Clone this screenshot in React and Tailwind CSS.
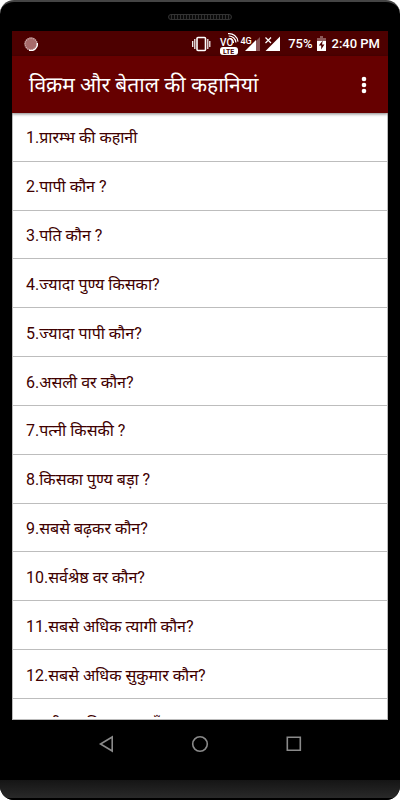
import React from "react";

const stories = [
  "प्रारम्भ की कहानी",
  "पापी कौन ?",
  "पति कौन ?",
  "ज्यादा पुण्य किसका?",
  "ज्यादा पापी कौन?",
  "असली वर कौन?",
  "पत्नी किसकी ?",
  "किसका पुण्य बड़ा ?",
  "सबसे बढ़कर कौन?",
  "सर्वश्रेष्ठ वर कौन?",
  "सबसे अधिक त्यागी कौन?",
  "सबसे अधिक सुकुमार कौन?",
];

function StatusBar() {
  return (
    <div className="flex h-[25px] shrink-0 items-center bg-[#4d0000] pt-px pr-2 pl-3 text-[13px] font-medium text-white">
      <svg className="h-[14px] w-[14px]" viewBox="0 0 14 14" aria-hidden="true">
        <circle cx="7" cy="7" r="6.4" fill="#a66b6b" />
        <circle cx="7" cy="7" r="6" fill="none" stroke="#d5baba" strokeWidth="1.4" strokeDasharray="1 1" />
        <path d="M13.3 6A6.4 6.4 0 0 1 5 13.2" fill="none" stroke="#fff" strokeWidth="1.3" />
      </svg>
      <svg className="ml-auto h-[24px] w-[90px]" viewBox="192 32 90 24" aria-hidden="true">
        <g fill="none" stroke="#fff">
          <rect x="197" y="37.5" width="8.5" height="13" rx="1" strokeWidth="1.6" />
          <path d="M194.8 39v10M192.7 41v6M207.8 39v10M209.8 41v6" strokeWidth="1.2" />
          <path d="M229.5 38.4a5 5 0 0 1 4 4.6M228.7 36a7 7 0 0 1 7.2 6.5M228 33.6a9 9 0 0 1 10 8" strokeWidth="1.2" />
        </g>
        <text x="220" y="46" fill="#fff" fontSize="10" fontWeight="500" fontFamily="Roboto, sans-serif">VO</text>
        <rect x="220" y="47" width="18" height="8" rx="3" fill="#fff" />
        <text x="223" y="53.7" fill="#4d0000" fontSize="7" fontWeight="700" fontFamily="Roboto, sans-serif">LTE</text>
        <text x="240.5" y="43.5" fill="#fff" fontSize="9" fontWeight="500" fontFamily="Roboto, sans-serif">4G</text>
        <path d="M260 37v14h-4V41z" fill="#8c5858" />
        <path d="M256 40v11h-11z" fill="#fff" />
        <path d="M280 36.5V51h-14.5z" fill="#fff" />
        <path d="M265.5 37.5l5.5 5.5m0-5.5l-5.5 5.5" stroke="#fff" strokeWidth="1.2" />
      </svg>
      <span className="ml-1.5">75%</span>
      <svg className="ml-1 h-[16px] w-[9px]" viewBox="0 0 9 16" aria-hidden="true">
        <path d="M3 0h3v2h3v3H0V2h3z" fill="#8c5858" />
        <path d="M0 5h9v10H0z" fill="#fff" />
        <path d="M5.8 4.5L1.8 9.6h2.4v4L7.4 8.6H5z" fill="#4d0000" />
      </svg>
      <span className="ml-1.5">2:40 PM</span>
    </div>
  );
}

export default function App() {
  return (
    <div className="h-screen bg-white font-[Roboto,'Noto_Sans',sans-serif]">
      <div className="flex h-full flex-col overflow-hidden rounded-[14px] border-t-2 border-[#444] bg-black">
        <div className="flex h-[29px] shrink-0 items-center justify-center">
          <div className="h-[6px] w-16 rounded-full border border-[#333] bg-[repeating-linear-gradient(90deg,#0a0a0a_0_2px,#303030_2px_3px)]" />
        </div>
        <div className="mx-3 flex min-h-0 flex-1 flex-col bg-white">
          <StatusBar />
          <header className="relative flex h-[57px] shrink-0 items-center justify-between bg-[#660000] pt-px pr-3 pl-[17px] text-white shadow-[0_1px_3px_rgba(0,0,0,0.5)]">
            <h1 className="pt-px text-[21px] whitespace-nowrap">विक्रम और बेताल की कहानियां</h1>
            <button type="button" aria-label="Menu" className="flex h-8 w-6 items-center justify-center">
              <svg className="h-[18px] w-[6px]" viewBox="0 0 6 18" fill="#fff" aria-hidden="true">
                <circle cx="3" cy="3" r="2.3" />
                <circle cx="3" cy="9" r="2.3" />
                <circle cx="3" cy="15" r="2.3" />
              </svg>
            </button>
          </header>
          <main className="flex min-h-0 flex-1 flex-col overflow-hidden border-x border-b border-[#bbb] pb-[2px] text-base text-[#400000]">
            <ol className="flex min-h-0 flex-1 flex-col">
              {stories.map((title, i) => (
                <li key={title} className="flex min-h-0 flex-1 items-center border-b border-[#bdbdbd] pt-[3px] pl-[13px]">
                  {i + 1}.{title}
                </li>
              ))}
            </ol>
            <div className="h-[18px] shrink-0 overflow-hidden pl-[13px]">
              <p className="flex h-12 items-center pt-[2px]">13.दीवान किसका कहाँ</p>
            </div>
          </main>
        </div>
        <nav className="flex h-[60px] shrink-0 items-start justify-center gap-[70px] pt-3" aria-label="System">
          <button type="button" aria-label="Back" className="h-6 w-6">
            <svg viewBox="0 0 24 24" fill="none" stroke="#8a8a8a" strokeWidth="1.6"><path d="M18.2 5v14L6.5 12z" /></svg>
          </button>
          <button type="button" aria-label="Home" className="h-6 w-6">
            <svg viewBox="0 0 24 24" fill="none" stroke="#8a8a8a" strokeWidth="1.6"><circle cx="12" cy="12" r="7.3" /></svg>
          </button>
          <button type="button" aria-label="Recents" className="h-6 w-6">
            <svg viewBox="0 0 24 24" fill="none" stroke="#8a8a8a" strokeWidth="1.6"><path d="M5.3 5.3h13v13h-13z" /></svg>
          </button>
        </nav>
        <div className="h-5 shrink-0 border-b-2 border-black bg-linear-to-b from-[#151515] to-[#292929]" />
      </div>
    </div>
  );
}
